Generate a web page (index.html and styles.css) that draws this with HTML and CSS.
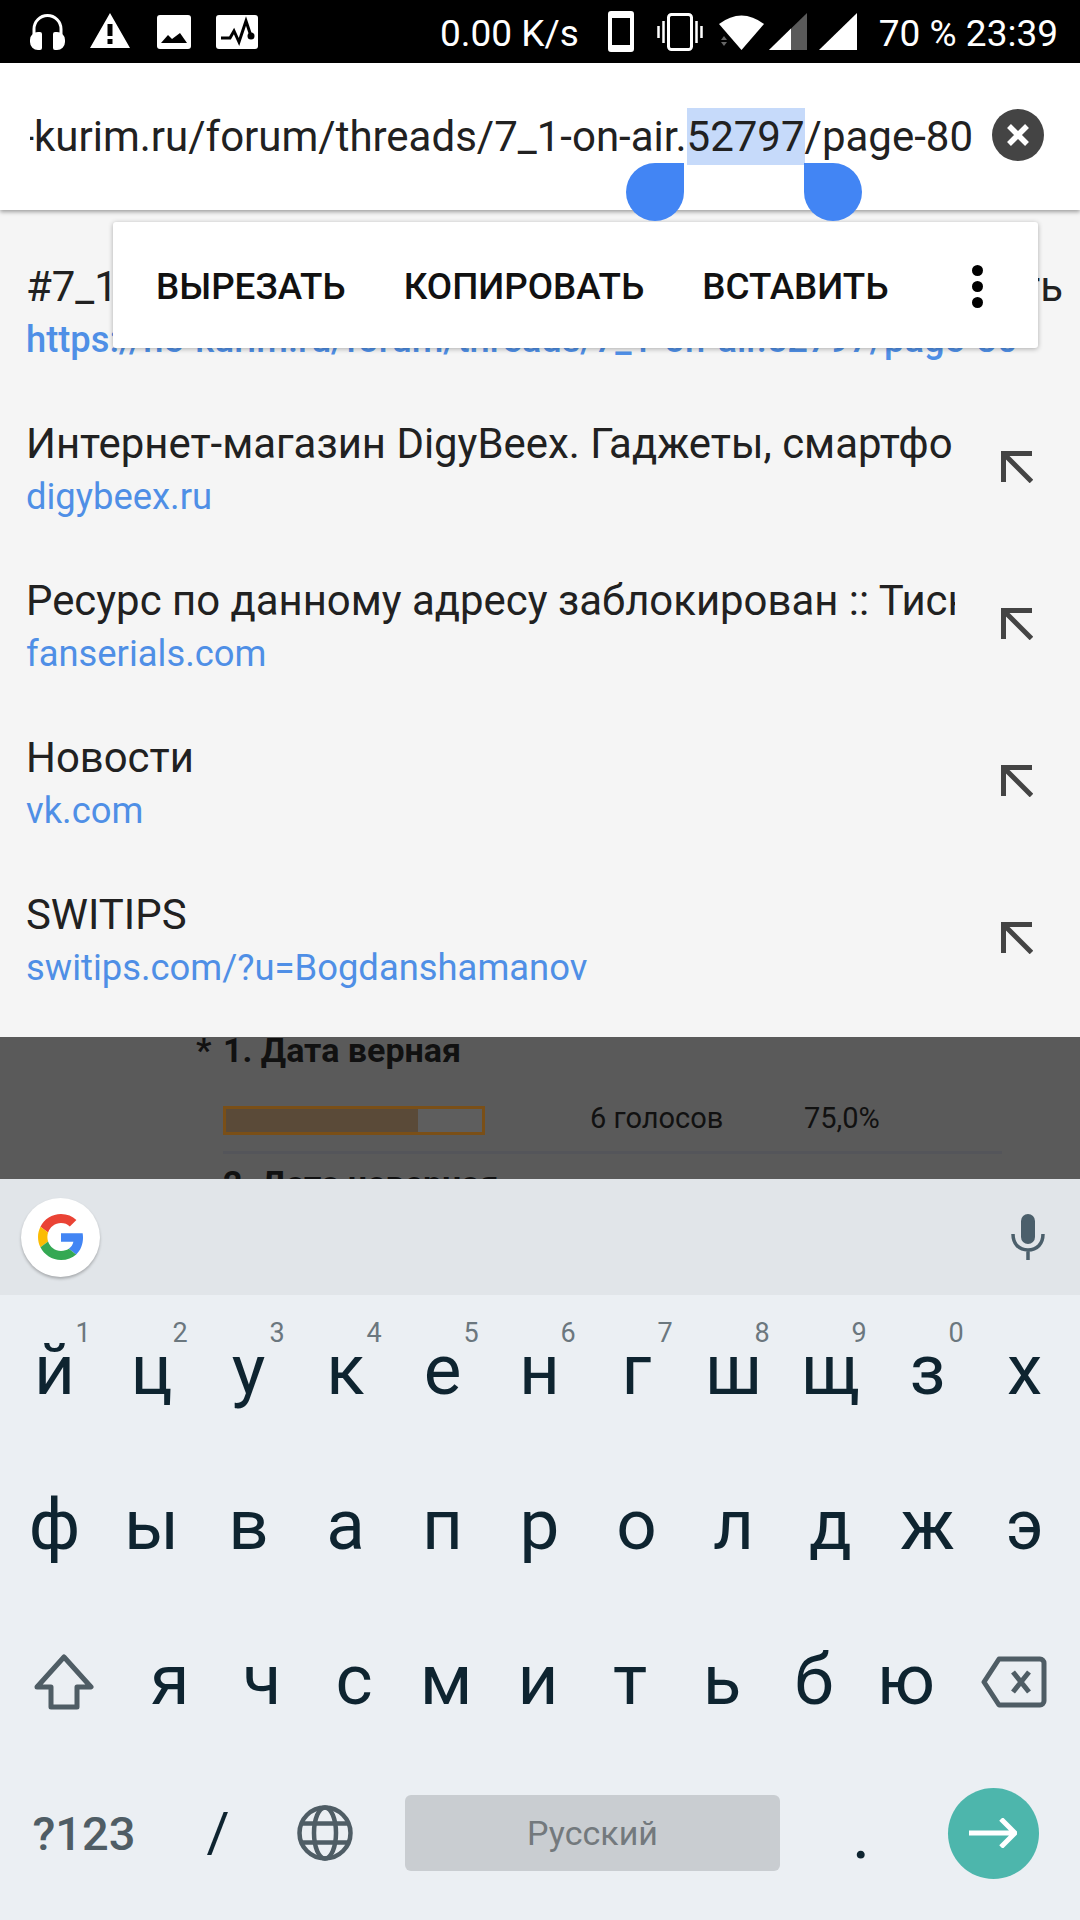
FILE: index.html
```html
<!DOCTYPE html>
<html lang="ru">
<head>
    <meta charset="UTF-8">
    <meta name="viewport" content="width=device-width, initial-scale=1.0">
    <title>Omnibox</title>
    <link rel="stylesheet" href="styles.css">
</head>
<body>
    <header class="status-bar">
        <div class="status-left">
            <svg class="ic-head" viewBox="0 0 35 38"><path d="M4 22V17a13.500 13.500 0 0 1 27 0V22" fill="none" stroke="#fff" stroke-width="3"/><path d="M8 20h2a2 2 0 0 1 2 2v14a2 2 0 0 1-2 2H8a8 8 0 0 1-8-8v-2a8 8 0 0 1 8-8zM27 20h-2a2 2 0 0 0-2 2v14a2 2 0 0 0 2 2h2a8 8 0 0 0 8-8v-2a8 8 0 0 0-8-8z" fill="#fff"/></svg>
            <svg class="ic-warn" viewBox="0 0 40 35"><path fill-rule="evenodd" d="M20 0L40 35H0zM17.500 11v12h5V11zM17.500 26v5h5v-5z" fill="#fff"/></svg>
            <svg class="ic-image" viewBox="0 0 34 34"><rect width="34" height="34" rx="3" fill="#fff"/><path d="M4 28L11 20l4 4L23 18l7 10z" fill="#000"/></svg>
            <svg class="ic-pulse" viewBox="0 0 42 34"><rect width="42" height="34" rx="3" fill="#fff"/><path d="M5 23h9l4-7 5 11 7-21 5 15" fill="none" stroke="#000" stroke-width="3"/><circle cx="35" cy="21" r="3.500" fill="#000"/></svg>
        </div>
        <div class="status-right">
            <span class="net-speed">0.00 K/s</span>
            <svg class="ic-phone" viewBox="0 0 26 41"><path fill-rule="evenodd" d="M3 0h20a3 3 0 0 1 3 3v35a3 3 0 0 1-3 3H3a3 3 0 0 1-3-3V3a3 3 0 0 1 3-3zM4 7v27h18V7z" fill="#fff"/></svg>
            <svg class="ic-vibrate" viewBox="0 0 46 38"><rect x="11.500" y="1.500" width="23" height="35" rx="3" fill="none" stroke="#fff" stroke-width="3"/><path d="M1.500 13v12M6.500 8v22M39.500 8v22M44.500 13v12" stroke="#fff" stroke-width="2.500"/></svg>
            <svg class="ic-wifi" viewBox="0 0 45 36"><path d="M0 10Q22.500-7 45 10L22.500 36z" fill="#fff"/><path d="M2 26l3-4 3 4zM2 28l3 4 3-4z" fill="#666"/></svg>
            <svg class="ic-signal" viewBox="0 0 38 37"><path d="M0 37L38 0v37z" fill="#5a5a5a"/><path d="M0 37L22 15.500V37z" fill="#fff"/></svg>
            <svg class="ic-signal" viewBox="0 0 38 37"><path d="M0 37L38 0v37z" fill="#fff"/></svg>
            <span class="batt-time">70 % 23:39</span>
        </div>
    </header>

    <div class="url-bar">
        <div class="url-field">
            <span class="url-text">https://ne-kurim.ru/forum/threads/7_1-on-air.<span class="url-selected">52797</span>/page-80</span>
        </div>
        <svg class="clear-btn" viewBox="0 0 52 52"><circle cx="26" cy="26" r="26" fill="#444"/><path d="M17 17l18 18M35 17L17 35" stroke="#fff" stroke-width="5.500"/></svg>
        <div class="handle handle-left"></div>
        <div class="handle handle-right"></div>
    </div>

    <main class="suggestions">
        <div class="text-menu">
            <span class="menu-item">ВЫРЕЗАТЬ</span>
            <span class="menu-item">КОПИРОВАТЬ</span>
            <span class="menu-item">ВСТАВИТЬ</span>
            <span class="menu-more"><i></i><i></i><i></i></span>
        </div>

        <div class="row row-wide">
            <div class="row-text">
                <div class="row-title row-title-split"><span>#7_1</span><span>ть</span></div>
                <div class="row-url row-url-strong">https://ne-kurim.ru/forum/threads/7_1-on-air.52797/page-80</div>
            </div>
        </div>
        <div class="row">
            <div class="row-text">
                <div class="row-title">Интернет-магазин DigyBeex. Гаджеты, смартфоны</div>
                <div class="row-url">digybeex.ru</div>
            </div>
            <svg class="row-arrow" viewBox="0 0 32 32"><path d="M31 2.500H2.500V31M2.500 2.500l28 28" fill="none" stroke="#444" stroke-width="5"/></svg>
        </div>
        <div class="row">
            <div class="row-text">
                <div class="row-title">Ресурс по данному адресу заблокирован :: Тиснение</div>
                <div class="row-url">fanserials.com</div>
            </div>
            <svg class="row-arrow" viewBox="0 0 32 32"><path d="M31 2.500H2.500V31M2.500 2.500l28 28" fill="none" stroke="#444" stroke-width="5"/></svg>
        </div>
        <div class="row">
            <div class="row-text">
                <div class="row-title">Новости</div>
                <div class="row-url">vk.com</div>
            </div>
            <svg class="row-arrow" viewBox="0 0 32 32"><path d="M31 2.500H2.500V31M2.500 2.500l28 28" fill="none" stroke="#444" stroke-width="5"/></svg>
        </div>
        <div class="row">
            <div class="row-text">
                <div class="row-title">SWITIPS</div>
                <div class="row-url">switips.com/?u=Bogdanshamanov</div>
            </div>
            <svg class="row-arrow" viewBox="0 0 32 32"><path d="M31 2.500H2.500V31M2.500 2.500l28 28" fill="none" stroke="#444" stroke-width="5"/></svg>
        </div>
    </main>

    <section class="page-dim">
        <div class="poll-title"><span class="poll-star">*</span>1. Дата верная</div>
        <div class="poll-line">
            <div class="poll-bar"><div class="poll-fill" style="width: 75%"></div></div>
            <span class="poll-votes">6 голосов</span>
            <span class="poll-pct">75,0%</span>
        </div>
        <div class="poll-sep"></div>
        <div class="poll-next">2. Дата неверная</div>
    </section>

    <section class="keyboard">
        <div class="kb-strip">
            <div class="g-btn">
                <svg viewBox="0 0 48 48"><path fill="#EA4335" d="M24 9.500c3.540 0 6.710 1.220 9.210 3.600l6.850-6.850C35.900 2.380 30.470 0 24 0 14.620 0 6.510 5.380 2.560 13.220l7.980 6.190C12.430 13.720 17.740 9.500 24 9.500z"/><path fill="#4285F4" d="M46.980 24.550c0-1.570-.15-3.090-.38-4.550H24v9.020h12.940c-.58 2.960-2.260 5.480-4.780 7.180l7.730 6c4.510-4.180 7.090-10.360 7.090-17.650z"/><path fill="#FBBC05" d="M10.530 28.590c-.48-1.450-.76-2.990-.76-4.590s.27-3.140.76-4.590l-7.980-6.190C.92 16.460 0 20.120 0 24c0 3.880.92 7.540 2.560 10.780l7.970-6.190z"/><path fill="#34A853" d="M24 48c6.480 0 11.930-2.130 15.890-5.810l-7.730-6c-2.150 1.450-4.920 2.300-8.160 2.300-6.260 0-11.570-4.220-13.470-9.910l-7.980 6.190C6.510 42.620 14.620 48 24 48z"/></svg>
            </div>
            <svg class="mic" viewBox="0 0 34 46"><rect x="10" y="0" width="14" height="30" rx="7" fill="#4b5f6b"/><path d="M2 20c0 10 6 16 15 16s15-6 15-16M17 36v10" fill="none" stroke="#4b5f6b" stroke-width="3.500"/></svg>
        </div>
        <div class="kb-rows">
            <div class="kb-row kb-row-11">
                <span class="key">й<sup>1</sup></span><span class="key">ц<sup>2</sup></span><span class="key">у<sup>3</sup></span><span class="key">к<sup>4</sup></span><span class="key">е<sup>5</sup></span><span class="key">н<sup>6</sup></span><span class="key">г<sup>7</sup></span><span class="key">ш<sup>8</sup></span><span class="key">щ<sup>9</sup></span><span class="key">з<sup>0</sup></span><span class="key">х</span>
            </div>
            <div class="kb-row kb-row-11 kb-row-tall">
                <span class="key">ф</span><span class="key">ы</span><span class="key">в</span><span class="key">а</span><span class="key">п</span><span class="key">р</span><span class="key">о</span><span class="key">л</span><span class="key">д</span><span class="key">ж</span><span class="key">э</span>
            </div>
            <div class="kb-row kb-row-shift">
                <span class="key">
                    <svg class="ic-shift" viewBox="0 0 60 56"><path d="M30 3L57 33H43V53H17V33H3z" fill="none" stroke="#4f5d65" stroke-width="5" stroke-linejoin="round"/></svg>
                </span>
                <span class="key">я</span><span class="key">ч</span><span class="key">с</span><span class="key">м</span><span class="key">и</span><span class="key">т</span><span class="key">ь</span><span class="key">б</span><span class="key">ю</span>
                <span class="key">
                    <svg class="ic-back" viewBox="0 0 66 52"><path d="M18 3H59a4 4 0 0 1 4 4V45a4 4 0 0 1-4 4H18L3 26z" fill="none" stroke="#4f5d65" stroke-width="5" stroke-linejoin="round"/><path d="M32 16l16 20M48 16L32 36" stroke="#4f5d65" stroke-width="5"/></svg>
                </span>
            </div>
            <div class="kb-row kb-row-bottom">
                <span class="key key-sym">?123</span>
                <span class="key key-slash">/</span>
                <span class="key">
                    <svg class="ic-globe" viewBox="0 0 56 56"><g fill="none" stroke="#4f5d65" stroke-width="4.500"><circle cx="28" cy="28" r="25.500"/><ellipse cx="28" cy="28" rx="11" ry="25.500"/><path d="M5 18.500h46M5 37.500h46"/></g></svg>
                </span>
                <span class="key"><span class="space-bar">Русский</span></span>
                <span class="key">.</span>
                <span class="key">
                    <span class="enter-btn">
                        <svg viewBox="0 0 48 30"><path d="M0 15h45M32 1l14 14-14 14" fill="none" stroke="#fff" stroke-width="5"/></svg>
                    </span>
                </span>
            </div>
        </div>
    </section>
</body>
</html>
```
FILE: styles.css
```css
:root {
    --ink: #212121;
    --link: #4f8fe6;
    --key-ink: #0e2430;
    --key-icon: #4f5d65;
    --kb-bg: #ebeff3;
}

* {
    margin: 0;
    padding: 0;
    box-sizing: border-box;
}

body {
    width: 1080px;
    height: 1920px;
    overflow: hidden;
    font-family: Roboto, sans-serif;
    background: var(--kb-bg);
}

/* status bar */
.status-bar {
    height: 63px;
    background: #000;
    color: #fff;
    display: flex;
    justify-content: space-between;
    align-items: center;
    padding: 0 22px 0 30px;
    font-size: 37px;
}

.status-left,
.status-right {
    display: flex;
    align-items: center;
}

.ic-head { width: 35px; height: 38px; margin-top: -1px; }
.ic-warn { width: 40px; height: 35px; margin-left: 25px; margin-top: -2px; }
.ic-image { width: 34px; height: 34px; margin-left: 27px; }
.ic-pulse { width: 42px; height: 34px; margin-left: 25px; }

.net-speed { margin: 4px 29px 0 0; }
.ic-phone { width: 26px; height: 41px; }
.ic-vibrate { width: 46px; height: 38px; margin-left: 23px; }
.ic-wifi { width: 45px; height: 36px; margin-left: 16px; }
.ic-signal { width: 38px; height: 37px; margin-left: 5px; }
.ic-signal + .ic-signal { margin-left: 12px; }
.batt-time { margin: 4px 0 0 22px; }

/* url bar */
.url-bar {
    position: relative;
    z-index: 3;
    height: 147px;
    background: #fff;
    box-shadow: 0 2px 4px rgba(0, 0, 0, 0.35);
    display: flex;
    align-items: center;
    padding: 0 36px 0 30px;
}

.url-field {
    width: 943px;
    display: flex;
    justify-content: flex-end;
    overflow: hidden;
}

.url-text {
    flex-shrink: 0;
    white-space: nowrap;
    font-size: 42px;
    line-height: 57px;
    color: #212121;
}

.url-selected {
    display: inline-block;
    background: #c6dafa;
}

.clear-btn {
    width: 52px;
    height: 52px;
    margin: -3px 0 0 19px;
}

.handle {
    position: absolute;
    top: 100px;
    width: 58px;
    height: 58px;
    background: #4285f4;
}

.handle-left { left: 626px; border-radius: 50% 0 50% 50%; }
.handle-right { left: 804px; border-radius: 0 50% 50% 50%; }

/* suggestion list */
.suggestions {
    position: relative;
    height: 827px;
    padding-top: 25px;
    background: #f5f5f5;
}

.text-menu {
    position: absolute;
    z-index: 2;
    top: 12px;
    left: 113px;
    width: 925px;
    height: 126px;
    padding: 2px 0 0 43px;
    display: flex;
    align-items: center;
    gap: 58px;
    background: #fff;
    border-radius: 3px;
    box-shadow: 0 1px 5px rgba(0, 0, 0, 0.3);
}

.menu-item {
    font-size: 36.800px;
    font-weight: 500;
    color: #111;
}

.menu-more {
    display: flex;
    flex-direction: column;
    gap: 5px;
    margin-left: 26px;
}

.menu-more i {
    width: 11px;
    height: 11px;
    border-radius: 50%;
    background: #000;
}

.row {
    height: 157px;
    padding: 26px 0 0 26px;
    display: flex;
    align-items: flex-start;
}

.row-text {
    width: 929px;
    overflow: hidden;
}

.row-wide .row-text {
    width: 1037px;
}

.row-title {
    font-size: 41.900px;
    line-height: 52px;
    color: var(--ink);
    white-space: nowrap;
    overflow: hidden;
}

.row-title-split {
    display: flex;
    justify-content: space-between;
}

.row-url {
    font-size: 36.400px;
    line-height: 54px;
    color: var(--link);
    white-space: nowrap;
}

.row-url-strong {
    font-size: 36.300px;
    font-weight: 500;
}

.row-arrow {
    width: 32px;
    height: 32px;
    margin: 33px 0 0 46px;
}

/* dimmed page behind */
.page-dim {
    height: 142px;
    overflow: hidden;
    background: #5a5a5a;
    padding: 0 78px 0 196px;
    color: #111;
}

.poll-title {
    display: flex;
    margin-top: -2px;
    font-size: 34px;
    font-weight: 700;
    line-height: 30px;
}

.poll-star {
    width: 27px;
}

.poll-line {
    display: flex;
    align-items: center;
    margin: 41px 0 0 27px;
    font-size: 29px;
}

.poll-bar {
    width: 262px;
    height: 29px;
    border: 3px solid #7a4f17;
    background: #5e5e5e;
}

.poll-fill {
    height: 100%;
    background: #5a4a38;
}

.poll-votes {
    margin: -6px 0 0 105px;
    width: 214px;
}

.poll-pct {
    margin-top: -6px;
}

.poll-sep {
    height: 3px;
    margin: 16px 0 0 27px;
    background: #54555a;
}

.poll-next {
    margin: 11px 0 0 27px;
    font-size: 34px;
    font-weight: 700;
    line-height: 36px;
}

/* keyboard */
.keyboard {
    height: 741px;
    background: var(--kb-bg);
}

.kb-strip {
    height: 116px;
    background: #e1e5e9;
    display: flex;
    justify-content: space-between;
    align-items: center;
    padding: 0 35px 0 21px;
}

.g-btn {
    width: 79px;
    height: 79px;
    border-radius: 50%;
    background: #fff;
    box-shadow: 0 2px 3px rgba(0, 0, 0, 0.25);
    display: flex;
    align-items: center;
    justify-content: center;
}

.g-btn svg {
    width: 46px;
    height: 46px;
}

.mic {
    width: 34px;
    height: 46px;
}

.kb-rows {
    margin-top: -3px;
}

.kb-row {
    display: grid;
    height: 154px;
}

.kb-row-tall {
    height: 156px;
}

.kb-row-11 {
    grid-template-columns: repeat(11, 97px);
    padding-left: 6px;
}

.kb-row-shift { grid-template-columns: 124px repeat(9, 92px) 124px; }
.kb-row-bottom { grid-template-columns: 168px 100px 114px 421px 116px 148px; }

.key {
    position: relative;
    display: flex;
    align-items: center;
    justify-content: center;
    font-size: 71px;
    color: var(--key-ink);
}

.key sup {
    position: absolute;
    top: 26px;
    left: 50%;
    margin-left: 21px;
    font-size: 27px;
    line-height: 30px;
    color: #6b777e;
}

.key-sym {
    font-size: 47px;
    font-weight: 500;
    color: var(--key-icon);
}

.key-slash {
    font-size: 56px;
}

.ic-shift { width: 60px; height: 56px; margin: 6px 0 0 4px; }
.ic-back { width: 66px; height: 52px; margin-top: 6px; }
.ic-globe { width: 56px; height: 56px; }

.space-bar {
    width: 375px;
    height: 76px;
    border-radius: 6px;
    background: #c9cdd1;
    color: #73797d;
    font-size: 34px;
    display: flex;
    align-items: center;
    justify-content: center;
}

.enter-btn {
    width: 91px;
    height: 91px;
    border-radius: 50%;
    background: #4db6ac;
    display: flex;
    align-items: center;
    justify-content: center;
}

.enter-btn svg {
    width: 48px;
    height: 30px;
}
```
